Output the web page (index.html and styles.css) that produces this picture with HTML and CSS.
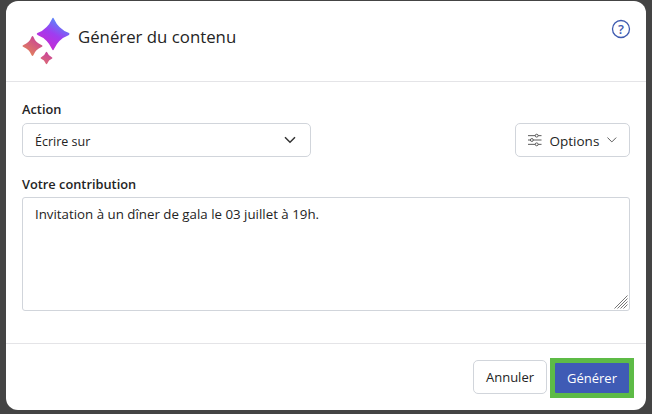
FILE: index.html
```html
<!DOCTYPE html>
<html lang="fr">
<head>
<meta charset="utf-8">
<title>Générer du contenu</title>
<link rel="stylesheet" href="styles.css">
</head>
<body>
<div class="dialog">
  <header class="head">
    <svg class="spark" width="56" height="56" viewBox="0 0 56 56">
      <defs>
        <linearGradient id="g1" x1="0.8" y1="0.1" x2="0.3" y2="0.95"><stop offset="0" stop-color="#4f90fb"/><stop offset="0.5" stop-color="#a03cf0"/><stop offset="1" stop-color="#c92bd0"/></linearGradient>
        <linearGradient id="g2" x1="0.8" y1="0.05" x2="0.2" y2="0.9"><stop offset="0" stop-color="#c8409a"/><stop offset="1" stop-color="#e2825a"/></linearGradient>
        <linearGradient id="g3" x1="0.7" y1="0" x2="0.3" y2="1"><stop offset="0" stop-color="#c8409e"/><stop offset="1" stop-color="#dc6c74"/></linearGradient>
      </defs>
      <path fill="url(#g2)" d="M13.500 22Q14.500 20 15.500 22Q17.500 27.500 23.500 30Q25.500 31 23.500 32Q17.500 34.500 15.500 40Q14.500 42 13.500 40Q11.500 34.500 5.500 32Q3.500 31 5.500 30Q11.500 27.500 13.500 22Z"/>
      <path fill="url(#g3)" d="M27.700 37.500Q28.500 36 29.300 37.500Q30.500 41 33.800 42.200Q35.300 43 33.800 43.800Q30.500 45 29.300 48.500Q28.500 50 27.700 48.500Q26.500 45 23.200 43.800Q21.700 43 23.200 42.200Q26.500 41 27.700 37.500Z"/>
      <path fill="url(#g1)" stroke="#fff" stroke-width="1.500" paint-order="stroke" d="M34 4Q35 1.500 36 4Q40.500 14 50.500 17.800Q52.500 19 50.500 20.200Q40.500 24 36 34Q35 36.500 34 34Q29.500 24 20 20.200Q17.500 19 20 17.800Q29.500 14 34 4Z"/>
    </svg>
    <h1 class="title">Générer du contenu</h1>
    <svg class="help" width="20" height="20" viewBox="0 0 20 20"><circle cx="10" cy="10" r="8.500" fill="none" stroke="#3f5bb0" stroke-width="1.300"/><text x="10" y="14.500" text-anchor="middle" class="help-mark">?</text></svg>
  </header>
  <main class="content">
    <label class="label">Action</label>
    <div class="row">
      <div class="select"><span class="nudge">Écrire sur</span>
        <svg width="12" height="8" viewBox="0 0 12 8"><path d="M1 1.200L6 6.200L11 1.200" fill="none" stroke="#333" stroke-width="1.500"/></svg>
      </div>
      <div class="options">
        <svg width="14" height="14" viewBox="0 0 14 14" fill="none" stroke="#555" stroke-width="1"><path d="M0 2.500H7.500M10.500 2.500H14M0 7H2.500M5.500 7H14M0 11.500H7.500M10.500 11.500H14"/><circle cx="9" cy="2.500" r="1.500"/><circle cx="4" cy="7" r="1.500"/><circle cx="9" cy="11.500" r="1.500"/></svg>
        <span class="nudge">Options</span>
        <svg width="10" height="6" viewBox="0 0 10 6"><path d="M0.500 0.500L5 5L9.500 0.500" fill="none" stroke="#555" stroke-width="1"/></svg>
      </div>
    </div>
    <label class="label label-second">Votre contribution</label>
    <div class="area">Invitation à un dîner de gala le 03 juillet à 19h.
      <svg class="grip" width="14" height="14" viewBox="0 0 14 14" stroke="#777" stroke-width="1"><path d="M0.500 13.500L13.500 0.500M3.500 13.500L13.500 3.500M6.500 13.500L13.500 6.500M9.500 13.500L13.500 9.500"/></svg>
    </div>
  </main>
  <footer class="foot">
    <button class="btn">Annuler</button>
    <span class="focus"><button class="btn primary">Générer</button></span>
  </footer>
</div>
</body>
</html>
```
FILE: styles.css
```css
* { box-sizing: border-box; }
html, body { margin: 0; height: 100%; }
body {
  background: #444;
  padding: 1px 6px 4px;
  font-family: "Open Sans", "Noto Sans", sans-serif;
  color: #242424;
  overflow: hidden;
}
.dialog {
  height: 409px;
  background: #fff;
  border-radius: 12px;
  display: flex;
  flex-direction: column;
}
.head {
  height: 81px;
  border-bottom: 1px solid #e4e4e7;
  display: flex;
  align-items: flex-start;
  padding: 14px 15px 0 12px;
}
.spark { flex: none; }
.title {
  margin: 7px 0 0 4px;
  font-size: 16.800px;
  line-height: 30px;
  font-weight: 400;
  flex: 1;
}
.help { margin-top: 4px; flex: none; }
.help-mark { font-family: "Open Sans", sans-serif; font-size: 13px; font-weight: 600; fill: #3f5bb0; }
.content { flex: 1; padding: 18px 16px 0; }
.label {
  display: block;
  font-size: 12.800px;
  line-height: 18px;
  font-weight: 600;
  margin-bottom: 5px;
}
.label-second { margin-top: 18px; margin-bottom: 4px; }
.row { display: flex; justify-content: space-between; align-items: center; }
.nudge { padding-top: 2px; }
.select {
  width: 289px;
  height: 34px;
  border: 1px solid #d1d5db;
  border-radius: 5px;
  display: flex;
  align-items: center;
  justify-content: space-between;
  padding: 0 14px 0 12px;
  font-size: 12.500px;
}
.options {
  width: 115px;
  height: 34px;
  border: 1px solid #d1d5db;
  border-radius: 5px;
  display: flex;
  align-items: center;
  gap: 8px;
  padding: 0 12px;
  font-size: 13.500px;
}
.area {
  position: relative;
  height: 114px;
  border: 1px solid #d1d5db;
  border-radius: 3px;
  padding: 7px 12px;
  font-size: 13.300px;
  line-height: 18px;
}
.grip { position: absolute; right: 1px; bottom: 1px; }
.foot {
  height: 67px;
  border-top: 1px solid #e4e4e7;
  display: flex;
  justify-content: flex-end;
  align-items: flex-start;
  padding: 16px 12px 0 0;
  gap: 3px;
}
.btn {
  font: inherit;
  font-size: 13px;
  height: 34px;
  width: 74px;
  background: #fff;
  border: 1px solid #d1d5db;
  border-radius: 5px;
  color: #242424;
  padding: 0;
}
.focus { display: block; background: #5dbb46; padding: 5px; margin-top: -2px; height: 40px; }
.primary {
  display: block;
  height: 30px;
  background: #3f5bb5;
  border: 0;
  border-radius: 1px;
  color: #fff;
}
```
